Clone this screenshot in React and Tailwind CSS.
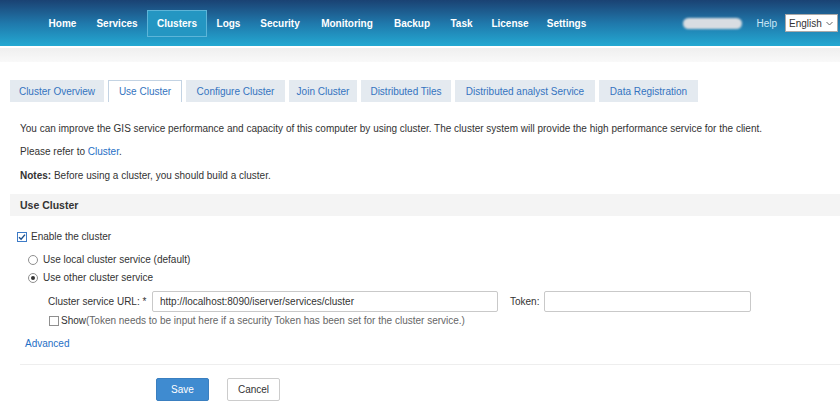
import React from 'react';

const NAV_ITEMS = [
  { label: 'Home', w: 'w-[49px]' },
  { label: 'Services', w: 'w-[60px]' },
  { label: 'Clusters', w: 'w-[60px]' },
  { label: 'Logs', w: 'w-[43px]' },
  { label: 'Security', w: 'w-[60px]' },
  { label: 'Monitoring', w: 'w-[74px]' },
  { label: 'Backup', w: 'w-[56px]' },
  { label: 'Task', w: 'w-[43px]' },
  { label: 'License', w: 'w-[54px]' },
  { label: 'Settings', w: 'w-[59px]' },
];

const TABS = [
  { label: 'Cluster Overview', w: 'w-[94px]' },
  { label: 'Use Cluster', w: 'w-[74px]' },
  { label: 'Configure Cluster', w: 'w-[99px]' },
  { label: 'Join Cluster', w: 'w-[68px]' },
  { label: 'Distributed Tiles', w: 'w-[90px]' },
  { label: 'Distributed analyst Service', w: 'w-[140px]' },
  { label: 'Data Registration', w: 'w-[99px]' },
];

const CheckBox = ({ checked }) => (
  <span
    className={`inline-flex items-center justify-center w-[10px] h-[10px] border bg-white ${checked ? 'border-[#3d7bc7]' : 'border-[#8f8f8f]'}`}
  >
    {checked && (
      <svg width="8" height="8" viewBox="0 0 8 8">
        <path d="M1 4.2 L3.1 6.3 L7 1.6" fill="none" stroke="#1d4f8c" strokeWidth="1.4" />
      </svg>
    )}
  </span>
);

const Radio = ({ checked }) => (
  <span className="inline-flex items-center justify-center w-[10px] h-[10px] rounded-full border border-[#8f8f8f] bg-white">
    {checked && <span className="w-[4px] h-[4px] rounded-full bg-[#333]" />}
  </span>
);

const Header = () => (
  <div>
    <div className="h-[46px] bg-gradient-to-b from-[#1a4273] via-[#1f78ab] to-[#24a9d2] flex items-center">
      <nav className="flex items-center ml-[38px]">
        {NAV_ITEMS.map((item) => (
          <a
            key={item.label}
            className={`${item.w} h-[27px] flex items-center justify-center border text-[10px] font-bold text-white ${
              item.label === 'Clusters' ? 'bg-[#2496c2] border-[#5db5d8]' : 'border-transparent'
            }`}
          >
            {item.label}
          </a>
        ))}
      </nav>
      <div className="ml-auto flex items-center">
        <span className="w-[59px] h-[11px] rounded-full bg-[#d9dde2] blur-[1px]" />
        <span className="ml-[14px] text-[10px] text-[#cde8f7]">Help</span>
        <div className="ml-[8px] mr-[2px] w-[53px] h-[18px] bg-white border border-[#a9a9a9] flex items-center justify-between pl-[3px] pr-[4px] text-[10px] text-[#333]">
          English
          <svg width="7" height="5" viewBox="0 0 7 5">
            <path d="M0.5 1 L3.5 4 L6.5 1" fill="none" stroke="#666" strokeWidth="1" />
          </svg>
        </div>
      </div>
    </div>
    <div className="h-[2px] bg-white" />
    <div className="h-[14px] bg-gradient-to-b from-[#efefef] to-[#f9f9f9]" />
  </div>
);

const Tabs = () => (
  <div className="flex items-end gap-[4px] ml-[10px] mt-[18px]">
    {TABS.map((tab) => (
      <div
        key={tab.label}
        className={`${tab.w} h-[22px] flex items-center justify-center text-[10px] text-[#3474c0] ${
          tab.label === 'Use Cluster' ? 'bg-white border border-b-0 border-[#c3d3e3]' : 'bg-[#e4eaf0]'
        }`}
      >
        {tab.label}
      </div>
    ))}
  </div>
);

export default function App() {
  return (
    <div className="w-[840px] h-[412px] overflow-hidden bg-white text-[#333] font-['Liberation_Sans',Arial,sans-serif]">
      <Header />
      <Tabs />

      <div className="text-[10px] leading-[14px]">
        <p className="ml-[20px] mt-[20px]">
          You can improve the GIS service performance and capacity of this computer by using cluster. The cluster system will provide the high performance service for the client.
        </p>
        <p className="ml-[20px] mt-[9px]">
          Please refer to <a className="text-[#1f6fc5]">Cluster</a>.
        </p>
        <p className="ml-[20px] mt-[10px]">
          <span className="font-bold">Notes:</span> Before using a cluster, you should build a cluster.
        </p>

        <div className="ml-[10px] mt-[11px] h-[22px] bg-[#f4f4f4] flex items-center px-[10px] font-bold text-[10.5px]">
          Use Cluster
        </div>

        <label className="flex items-center gap-[4px] ml-[17px] mt-[14px]">
          <CheckBox checked />
          Enable the cluster
        </label>

        <div className="ml-[28px] mt-[9px] flex flex-col gap-[4px]">
          <label className="flex items-center gap-[5px]">
            <Radio />
            Use local cluster service (default)
          </label>
          <label className="flex items-center gap-[5px]">
            <Radio checked />
            Use other cluster service
          </label>
        </div>

        <div className="ml-[48px] mt-[6px] flex items-center">
          <span className="w-[104px]">Cluster service URL: *</span>
          <div className="w-[346px] h-[21px] border border-[#c9c9c9] rounded-[2px] flex items-center px-[7px]">
            http://localhost:8090/iserver/services/cluster
          </div>
          <span className="ml-[12px] w-[34px]">Token:</span>
          <div className="w-[207px] h-[21px] border border-[#c9c9c9] rounded-[2px]" />
        </div>

        <label className="ml-[49px] mt-[2px] flex items-center gap-[2px]">
          <CheckBox />
          <span>
            <span className="text-[#333]">Show</span>
            <span className="text-[#666]">(Token needs to be input here if a security Token has been set for the cluster service.)</span>
          </span>
        </label>

        <a className="block ml-[25px] mt-[9px] text-[#1f6fc5]">Advanced</a>

        <div className="ml-[20px] mt-[13px] border-t border-[#eeeeee]" />

        <div className="flex gap-[18px] ml-[156px] mt-[13px]">
          <button className="w-[53px] h-[23px] rounded-[2px] bg-[#3f8bd0] border border-[#3a7fc0] text-white text-[10px]">
            Save
          </button>
          <button className="w-[53px] h-[23px] rounded-[2px] bg-white border border-[#cccccc] text-[#333] text-[10px]">
            Cancel
          </button>
        </div>
      </div>
    </div>
  );
}
